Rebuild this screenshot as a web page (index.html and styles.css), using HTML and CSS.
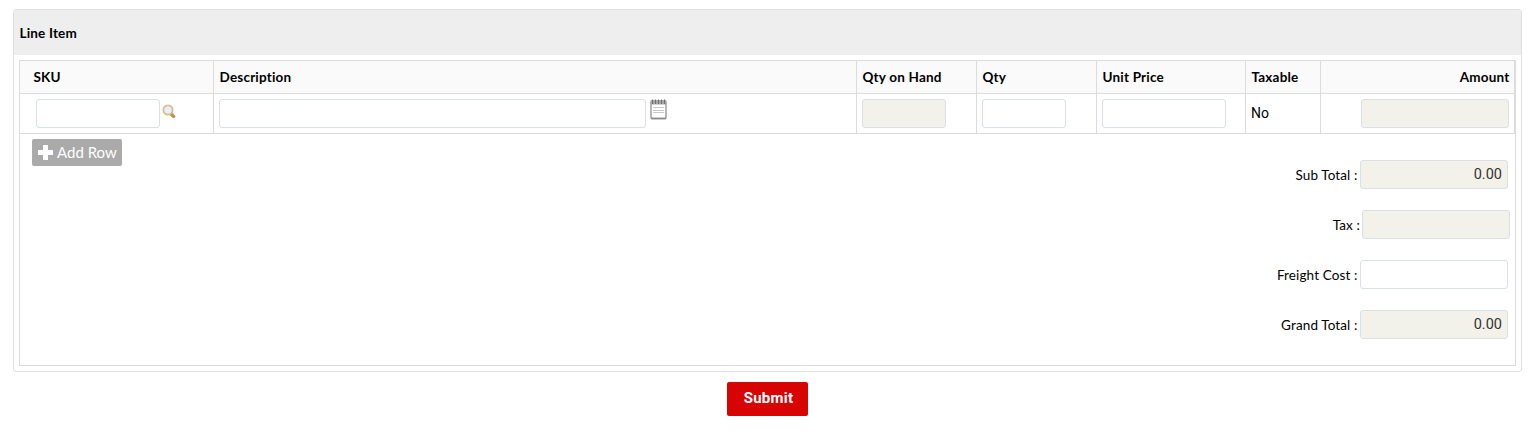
FILE: index.html
```html
<!DOCTYPE html>
<html lang="en">
<head>
<meta charset="utf-8">
<title>Line Item</title>
<link rel="stylesheet" href="styles.css">
</head>
<body>
<form class="page">
  <section class="panel">
    <h2 class="panel-title">Line Item</h2>
    <div class="panel-body">
      <div class="grid head">
        <div class="cell sku">SKU</div>
        <div class="cell">Description</div>
        <div class="cell">Qty on Hand</div>
        <div class="cell">Qty</div>
        <div class="cell">Unit Price</div>
        <div class="cell">Taxable</div>
        <div class="cell right">Amount</div>
      </div>
      <div class="grid row">
        <div class="cell sku-field">
          <input class="field w124" type="text" aria-label="SKU">
          <svg class="search" width="14" height="15" viewBox="0 0 14 15">
            <path d="M9.2 10l2.4 2.4" stroke="#bd8f59" stroke-width="3.4" stroke-linecap="round"/>
            <circle cx="6" cy="6" r="4.6" fill="#e6f0fb" stroke="#dcbb88" stroke-width="1.8"/>
          </svg>
        </div>
        <div class="cell">
          <input class="field w427" type="text" aria-label="Description">
          <svg class="note" width="17" height="21" viewBox="0 0 17 21">
            <rect x="1" y="3" width="15" height="16.5" rx="1" fill="#fff" stroke="#a6a6a6" stroke-width="1.6"/>
            <path d="M1 19.5h15" stroke="#8c8c8c" stroke-width="1.6"/>
            <rect x=".5" y="1" width="16" height="4.5" rx="1" fill="#a8a8a8"/>
            <path d="M2.5 .5v4.5M5.5 .5v4.5M8.5 .5v4.5M11.5 .5v4.5M14.5 .5v4.5" stroke="#707070" stroke-width="1"/>
            <path d="M3 8.5h11M3 11.5h11M3 13.5h11" stroke="#c8c8c8" stroke-width="1"/>
          </svg>
        </div>
        <div class="cell"><input class="field w84 readonly" type="text" readonly aria-label="Qty on Hand"></div>
        <div class="cell"><input class="field w84" type="text" aria-label="Qty"></div>
        <div class="cell"><input class="field w124" type="text" aria-label="Unit Price"></div>
        <div class="cell taxable">No</div>
        <div class="cell right"><input class="field w148 readonly" type="text" readonly aria-label="Amount"></div>
      </div>
      <div class="footer">
        <button class="add" type="button">
          <svg width="15" height="15" viewBox="0 0 15 15"><path d="M5 0h5v5h5v5h-5v5H5v-5H0V5h5z" fill="#fff"/></svg>
          <span>Add Row</span>
        </button>
        <div class="totals">
          <label class="total"><span>Sub Total :</span><input class="field w148 readonly" type="text" value="0.00" readonly></label>
          <label class="total tax"><span>Tax :</span><input class="field w148 readonly" type="text" readonly></label>
          <label class="total"><span>Freight Cost :</span><input class="field w148" type="text"></label>
          <label class="total"><span>Grand Total :</span><input class="field w148 readonly" type="text" value="0.00" readonly></label>
        </div>
      </div>
    </div>
  </section>
  <button class="submit" type="button">Submit</button>
</form>
</body>
</html>
```
FILE: styles.css
```css
* { box-sizing: border-box; }
body {
  margin: 0;
  background: #fff;
  color: #000;
  font: 14px/20px Lato, "Liberation Sans", sans-serif;
}
.page {
  display: flex;
  flex-direction: column;
  padding: 9px 17px 0 13px;
}
.panel {
  height: 363px;
  border: 1px solid #dfdfdf;
  border-radius: 3px;
  padding-bottom: 5px;
  display: flex;
  flex-direction: column;
}
.panel-title {
  margin: 0;
  height: 45px;
  padding: 0 5.5px;
  background: #eee;
  font-size: 13.5px;
  line-height: 47px;
  font-weight: 700;
  letter-spacing: .18px;
}
.panel-body {
  flex: 1;
  margin: 5px 5px 0;
  border: 1px solid #dcdcdc;
}
.grid {
  display: grid;
  grid-template-columns: 194px 643px 120px 120px 149px 75px 194px;
  border-bottom: 1px solid #dcdcdc;
}
.cell {
  display: flex;
  padding: 0 5px;
  border-right: 1px solid #dcdcdc;
}
.head {
  height: 33px;
  background: #fafafa;
  font-size: 13.5px;
  line-height: 32px;
  font-weight: 700;
  letter-spacing: .2px;
}
.head .cell { padding: 0 4.5px 0 5.5px; }
.head .sku { padding-left: 13.5px; }
.row { height: 40px; }
.row .cell { padding-top: 5px; }
.row .sku-field { padding-left: 16px; }
.right { justify-content: flex-end; }
.row .taxable { font: 14px/28px Roboto, sans-serif; }
.field {
  height: 29px;
  margin: 0;
  padding: 0 5px;
  border: 1px solid #dae0e8;
  border-radius: 3px;
  background: #fff;
  color: #333;
  font: 400 14.5px/20px Roboto, sans-serif;
  text-align: right;
}
.readonly { background: #f2f2ea; }
.w84 { width: 84px; }
.w124 { width: 124px; }
.w148 { width: 148px; }
.w427 { width: 427px; }
.search { margin: 5px 0 0 2px; }
.note { margin: 0 0 0 4px; }
.footer {
  display: flex;
  justify-content: space-between;
  align-items: flex-start;
  padding: 5px 7px 0 12px;
}
.add {
  display: flex;
  align-items: center;
  gap: 4px;
  width: 90px;
  height: 27px;
  padding: 0 6px;
  border: 0;
  border-radius: 2px;
  background: #aaa;
  color: #fff;
  font: 15px/27px Lato, sans-serif;
  white-space: nowrap;
}
.add svg { flex: none; }
.totals {
  display: flex;
  flex-direction: column;
  gap: 21px;
  padding-top: 21px;
}
.total {
  display: flex;
  justify-content: flex-end;
  align-items: center;
  gap: 2.5px;
  font-size: 13.5px;
  letter-spacing: .12px;
}
.tax { margin-right: -2px; gap: 2px; }
.submit {
  align-self: center;
  width: 81px;
  height: 34px;
  margin-top: 10px;
  padding: 0 0 2px 2px;
  border: 0;
  border-radius: 2px;
  background: #d80404;
  color: #fff;
  font: 700 15px/32px Roboto, sans-serif;
  letter-spacing: .25px;
}
```
